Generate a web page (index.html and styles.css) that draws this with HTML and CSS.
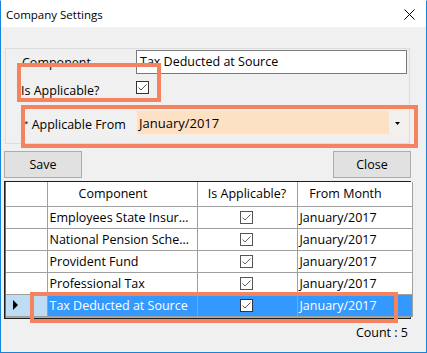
FILE: index.html
```html
<!DOCTYPE html>
<html lang="en">

<head>
    <meta charset="UTF-8">
    <meta name="viewport" content="width=device-width, initial-scale=1.0">
    <title>Company Settings</title>
    <link rel="stylesheet" href="styles.css">
</head>

<body>

    <div class="window">

        <div class="titlebar">
            <span class="title">Company Settings</span>
            <span class="close-x">
                <svg width="11" height="11" viewBox="0 0 11 11"><path d="M0.5 0.5 L10.5 10.5 M10.5 0.5 L0.5 10.5" stroke="#000" stroke-width="1"/></svg>
            </span>
        </div>

        <div class="content">

            <div class="group">
                <div class="row row-component">
                    <label class="lbl">Component</label>
                    <div class="textbox">Tax Deducted at Source</div>
                </div>
                <div class="row row-check">
                    <label class="lbl lbl-check">Is Applicable?</label>
                    <span class="check">
                        <svg width="13" height="13" viewBox="0 0 13 13"><rect x="0.5" y="0.5" width="12" height="12" fill="#fff" stroke="#333"/><path d="M2.5 6.5 L5 9 L10.5 3.5" fill="none" stroke="#555" stroke-width="1"/></svg>
                    </span>
                </div>
                <div class="row row-from">
                    <label class="lbl lbl-from"><span class="star">*</span> Applicable From</label>
                    <div class="combo">
                        <span class="combo-text">January/2017</span>
                        <span class="combo-btn">
                            <svg width="5" height="3" viewBox="0 0 5 3"><path d="M0 0 H5 L2.5 3 Z" fill="#000"/></svg>
                        </span>
                    </div>
                </div>
            </div>

            <div class="buttons">
                <button type="button" class="btn">Save</button>
                <button type="button" class="btn">Close</button>
            </div>

            <div class="grid">
                <table>
                    <colgroup>
                        <col class="c-head">
                        <col class="c-comp">
                        <col class="c-app">
                        <col class="c-month">
                    </colgroup>
                    <thead>
                        <tr>
                            <th></th>
                            <th class="h-comp">Component</th>
                            <th class="h-app">Is Applicable?</th>
                            <th class="h-month">From Month</th>
                        </tr>
                    </thead>
                    <tbody>
                        <tr>
                            <td class="rh"></td>
                            <td>Employees State Insur…</td>
                            <td class="cb"><svg width="13" height="13" viewBox="0 0 13 13"><rect x="0.5" y="0.5" width="12" height="12" fill="#fff" stroke="#555"/><path d="M2.5 6.5 L5 9 L10.5 3.5" fill="none" stroke="#666" stroke-width="1"/></svg></td>
                            <td>January/2017</td>
                        </tr>
                        <tr>
                            <td class="rh"></td>
                            <td>National Pension Sche…</td>
                            <td class="cb"><svg width="13" height="13" viewBox="0 0 13 13"><rect x="0.5" y="0.5" width="12" height="12" fill="#fff" stroke="#555"/><path d="M2.5 6.5 L5 9 L10.5 3.5" fill="none" stroke="#666" stroke-width="1"/></svg></td>
                            <td>January/2017</td>
                        </tr>
                        <tr>
                            <td class="rh"></td>
                            <td>Provident Fund</td>
                            <td class="cb"><svg width="13" height="13" viewBox="0 0 13 13"><rect x="0.5" y="0.5" width="12" height="12" fill="#fff" stroke="#555"/><path d="M2.5 6.5 L5 9 L10.5 3.5" fill="none" stroke="#666" stroke-width="1"/></svg></td>
                            <td>January/2017</td>
                        </tr>
                        <tr>
                            <td class="rh"></td>
                            <td>Professional Tax</td>
                            <td class="cb"><svg width="13" height="13" viewBox="0 0 13 13"><rect x="0.5" y="0.5" width="12" height="12" fill="#fff" stroke="#555"/><path d="M2.5 6.5 L5 9 L10.5 3.5" fill="none" stroke="#666" stroke-width="1"/></svg></td>
                            <td>January/2017</td>
                        </tr>
                        <tr class="selected">
                            <td class="rh"><svg width="6" height="10" viewBox="0 0 6 10"><path d="M0 0 L5 5 L0 10 Z" fill="#000"/></svg></td>
                            <td>Tax Deducted at Source</td>
                            <td class="cb"><svg width="13" height="13" viewBox="0 0 13 13"><rect x="0.5" y="0.5" width="12" height="12" fill="#fff" stroke="#333"/><path d="M2.5 6.5 L5 9 L10.5 3.5" fill="none" stroke="#555" stroke-width="1"/></svg></td>
                            <td>January/2017</td>
                        </tr>
                    </tbody>
                </table>
            </div>

            <div class="count">Count : 5</div>

        </div>

        <!-- highlight boxes drawn over the form -->
        <div class="mark mark1"></div>
        <div class="mark mark2"></div>
        <div class="mark mark3"></div>

    </div>

</body>

</html>
```

FILE: styles.css
```css
* {
    box-sizing: border-box;
}

body {
    margin: 0;
    font-family: "Open Sans", "Noto Sans", Arial, sans-serif;
    font-size: 12.5px;
    color: #000;
    background: #fff;
}

.window {
    position: relative;
    width: 427px;
    height: 353px;
    background: #f0f0f0;
    border: 1px solid #1883d7;
    border-top-color: #fff;
    overflow: hidden;
}

.titlebar {
    height: 26px;
    background: #fff;
    display: flex;
    align-items: center;
    justify-content: space-between;
    padding: 0 11px 0 5px;
}

.title {
    font-size: 11.5px;
}

.close-x svg {
    display: block;
}

.content {
    padding: 0 15px 0 3px;
}

.group {
    margin: 21px 1px 0;
    height: 96px;
    border: 1px solid #dcdcdc;
    padding-top: 1px;
}

.row {
    display: flex;
    align-items: center;
}

.lbl {
    width: 130px;
    padding-left: 16px;
}

.row-component {
    height: 24px;
}

.textbox {
    width: 271px;
    height: 24px;
    background: #fff;
    border: 1px solid #7a7a7a;
    padding: 2px 3px;
    font-size: 12.5px;
    line-height: 18px;
}

.row-check {
    margin-top: 7px;
    height: 13px;
    align-items: flex-start;
}

.lbl-check {
    padding-left: 15px;
    margin-top: 3px;
    line-height: 13px;
    font-size: 12.5px;
}

.check svg {
    display: block;
}

.row-from {
    margin-top: 16px;
    height: 25px;
}

.lbl-from {
    padding-left: 18px;
    margin-top: 3px;
}

.star {
    font-size: 8px;
    vertical-align: 3px;
}

.combo {
    width: 271px;
    height: 25px;
    border: 1px solid #fbeee0;
    background: #fde1c4;
    display: flex;
    align-items: center;
}

.combo-text {
    flex: 1;
    padding-left: 2px;
    font-size: 13px;
}

.combo-btn {
    width: 17px;
    height: 100%;
    background: #f0f0f0;
    display: flex;
    align-items: center;
    justify-content: center;
}

.combo-btn svg {
    display: block;
    margin-top: 1px;
}

.buttons {
    display: flex;
    justify-content: space-between;
    margin-top: 7px;
}

.btn {
    width: 78px;
    height: 27px;
    background: #e1e1e1;
    border: 1px solid #adadad;
    font-family: inherit;
    font-size: 12.5px;
    padding: 0;
    color: #000;
}

.grid {
    margin-top: 3px;
    height: 138px;
    background: #ababab;
    border: 1px solid #1e1e1e;
    border-right-color: #444;
    box-shadow: inset 1px 0 0 #707070;
    padding-left: 1px;
}

.grid table {
    width: 406px;
    border-collapse: collapse;
    table-layout: fixed;
}

.c-head {
    width: 41px;
}

.c-comp {
    width: 150px;
}

.c-app {
    width: 100px;
}

.c-month {
    width: 115px;
}

.grid th,
.grid td {
    border: 1px solid #a0a0a0;
    white-space: nowrap;
    overflow: hidden;
    padding: 0 0 0 2px;
    font-size: 12.5px;
    text-align: left;
    background: #fff;
}

.grid tr:first-child th {
    border-top: none;
}

.grid th:first-child,
.grid td:first-child {
    border-left: none;
}

.grid th {
    height: 24px;
    font-weight: normal;
    text-align: center;
    padding: 0;
}

.h-comp,
.h-month {
    padding-right: 18px !important;
}

.grid td {
    height: 22px;
}

.grid td.cb {
    text-align: center;
    padding: 0 2px 0 0;
}

.grid td.cb svg {
    display: inline-block;
    vertical-align: middle;
    margin-top: -2px;
}

.grid td.rh {
    border-top-color: #e0e0e0;
    padding-left: 7px;
}

.grid td.rh svg {
    display: block;
}

.selected td {
    background: #3399ff;
    color: #fff;
}

.selected td.rh {
    background: #bfdcf5;
}

.count {
    text-align: right;
    padding-top: 5px;
    padding-right: 3px;
    font-size: 12.5px;
}

.mark {
    position: absolute;
    border: 4px solid #f4845f;
}

.mark1 {
    left: 16px;
    top: 62px;
    width: 144px;
    height: 39px;
}

.mark2 {
    left: 20px;
    top: 104px;
    width: 397px;
    height: 43px;
}

.mark3 {
    left: 29px;
    top: 291px;
    width: 368px;
    height: 31px;
}
```
